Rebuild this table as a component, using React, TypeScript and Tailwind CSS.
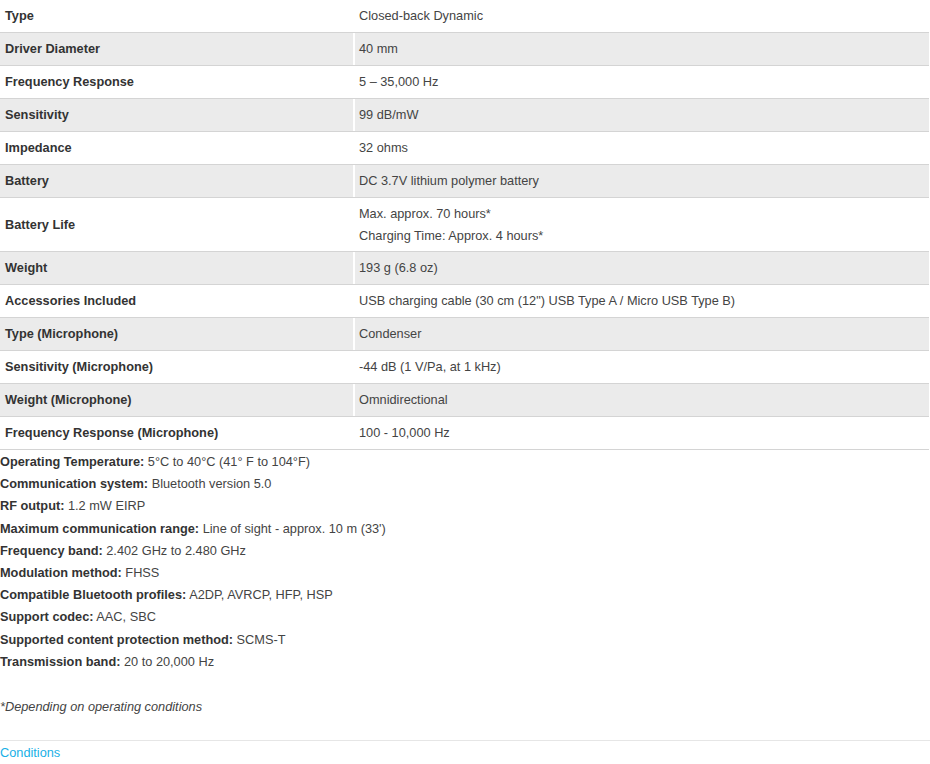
import React from "react";

const rows: { label: string; value: React.ReactNode; tall?: boolean }[] = [
  { label: "Type", value: "Closed-back Dynamic" },
  { label: "Driver Diameter", value: "40 mm" },
  { label: "Frequency Response", value: "5 – 35,000 Hz" },
  { label: "Sensitivity", value: "99 dB/mW" },
  { label: "Impedance", value: "32 ohms" },
  { label: "Battery", value: "DC 3.7V lithium polymer battery" },
  {
    label: "Battery Life",
    value: (
      <>
        <div>Max. approx. 70 hours*</div>
        <div>Charging Time: Approx. 4 hours*</div>
      </>
    ),
    tall: true,
  },
  { label: "Weight", value: "193 g (6.8 oz)" },
  { label: "Accessories Included", value: 'USB charging cable (30 cm (12") USB Type A / Micro USB Type B)' },
  { label: "Type (Microphone)", value: "Condenser" },
  { label: "Sensitivity (Microphone)", value: "-44 dB (1 V/Pa, at 1 kHz)" },
  { label: "Weight (Microphone)", value: "Omnidirectional" },
  { label: "Frequency Response (Microphone)", value: "100 - 10,000 Hz" },
];

const specs: [string, string][] = [
  ["Operating Temperature:", "5°C to 40°C (41° F to 104°F)"],
  ["Communication system:", "Bluetooth version 5.0"],
  ["RF output:", "1.2 mW EIRP"],
  ["Maximum communication range:", "Line of sight - approx. 10 m (33')"],
  ["Frequency band:", "2.402 GHz to 2.480 GHz"],
  ["Modulation method:", "FHSS"],
  ["Compatible Bluetooth profiles:", "A2DP, AVRCP, HFP, HSP"],
  ["Support codec:", "AAC, SBC"],
  ["Supported content protection method:", "SCMS-T"],
  ["Transmission band:", "20 to 20,000 Hz"],
];

export default function App() {
  return (
    <div
      className="w-[930px] h-[764px] bg-white text-[12.75px] text-[#444] overflow-hidden"
      style={{ fontFamily: '"Liberation Sans", Arial, sans-serif' }}
    >
      <div className="w-[929px]">
        {rows.map((r, i) => (
          <div
            key={r.label}
            className={`grid grid-cols-[353px_1fr] border-b border-[#d4d4d4] ${
              i % 2 === 1 ? "bg-[#ebebeb]" : "bg-white"
            } ${r.tall ? "h-[54px]" : "h-[33px]"}`}
          >
            <div className="flex items-center pl-[5px] font-bold text-[#333]">{r.label}</div>
            <div
              className={`border-l-2 border-white pl-[4px] ${
                r.tall ? "flex flex-col justify-center leading-[22px]" : "flex items-center"
              }`}
            >
              {r.value}
            </div>
          </div>
        ))}
      </div>
      <div className="leading-[22.2px] pt-[1px]">
        {specs.map(([k, v]) => (
          <div key={k}>
            <span className="font-bold text-[#333]">{k}</span> {v}
          </div>
        ))}
        <div className="h-[22px]" />
        <div className="italic text-[#444] pt-[1px]">*Depending on operating conditions</div>
      </div>
      <div className="mt-[22px] border-t border-[#e6e6e6] pt-[2px] leading-[20px] text-[#19b0e6]">Conditions</div>
    </div>
  );
}
